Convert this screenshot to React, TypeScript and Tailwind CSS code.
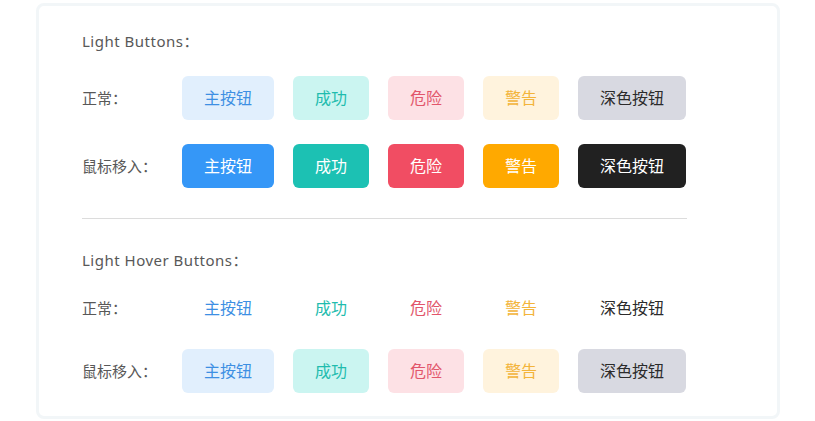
const buttons = ['主按钮', '成功', '危险', '警告', '深色按钮']

const light = [
  'bg-[#e1effd] text-[#3d8fe3]',
  'bg-[#cbf5f1] text-[#1fbcae]',
  'bg-[#fde1e5] text-[#e2566b]',
  'bg-[#fff3dd] text-[#f3b43a]',
  'bg-[#d8d9e1] text-[#2b2b2b]',
]

const solid = [
  'bg-[#3597f7] text-white',
  'bg-[#1cc1b3] text-white',
  'bg-[#f14d63] text-white',
  'bg-[#ffa900] text-white',
  'bg-[#212121] text-white',
]

const plain = [
  'bg-transparent text-[#3d8fe3]',
  'bg-transparent text-[#1fbcae]',
  'bg-transparent text-[#e2566b]',
  'bg-transparent text-[#f3b43a]',
  'bg-transparent text-[#2b2b2b]',
]

function Row({ label, styles }: { label: string; styles: string[] }) {
  return (
    <div className="flex items-center">
      <span className="w-[100px] text-[15px] leading-5 text-[#585858]">{label}</span>
      <div className="flex gap-[19px]">
        {buttons.map((text, i) => (
          <button
            key={text}
            className={`h-[44px] rounded-md px-[22px] text-[16px] leading-6 ${styles[i]}`}
          >
            {text}
          </button>
        ))}
      </div>
    </div>
  )
}

export default function App() {
  return (
    <div
      className="h-[421px] w-[815px] bg-white pt-[3px] pl-[36px]"
      style={{ fontFamily: '"Noto Sans", "Noto Sans CJK SC", sans-serif' }}
    >
      <div className="flex h-[416px] w-[744px] flex-col rounded-lg border-[3px] border-[#f2f6f8] bg-white pl-[43px] pt-[25px]">
        <h3 className="text-[15px] leading-5 tracking-[0.5px] text-[#585858]">Light Buttons：</h3>
        <div className="mt-[25px]">
          <Row label="正常：" styles={light} />
        </div>
        <div className="mt-[24px]">
          <Row label="鼠标移入：" styles={solid} />
        </div>
        <div className="mt-[30px] h-px w-[605px] bg-[#dcdcdc]" />
        <h3 className="mt-[31px] text-[15px] leading-5 tracking-[0.5px] text-[#585858]">
          Light Hover Buttons：
        </h3>
        <div className="mt-[16px]">
          <Row label="正常：" styles={plain} />
        </div>
        <div className="mt-[19px]">
          <Row label="鼠标移入：" styles={light} />
        </div>
      </div>
    </div>
  )
}
